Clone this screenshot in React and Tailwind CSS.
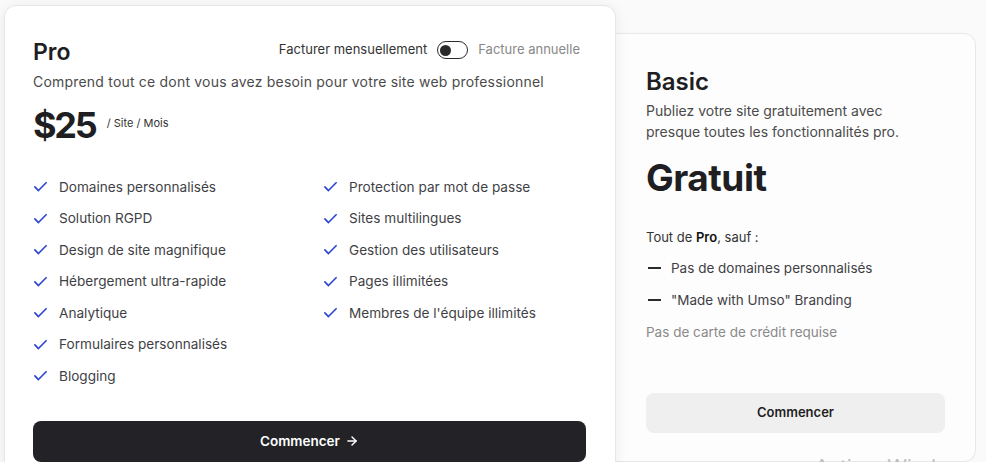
import { ArrowRight } from "lucide-react";

const proFeatures = [
  ["Domaines personnalisés", "Protection par mot de passe"],
  ["Solution RGPD", "Sites multilingues"],
  ["Design de site magnifique", "Gestion des utilisateurs"],
  ["Hébergement ultra-rapide", "Pages illimitées"],
  ["Analytique", "Membres de l'équipe illimités"],
  ["Formulaires personnalisés", null],
  ["Blogging", null],
];

function Check() {
  return (
    <svg width="15" height="15" viewBox="0 0 16 16" fill="none" className="shrink-0">
      <path d="M2 8.5l3.8 3.8L14 4" stroke="#2e45d4" strokeWidth="1.8" strokeLinecap="round" strokeLinejoin="round" />
    </svg>
  );
}

function Feature({ label }) {
  return (
    <div className="flex items-center gap-[11px] h-[31.5px]">
      <Check />
      <span className="text-[13.6px] text-[#3f3f46]">{label}</span>
    </div>
  );
}

function ProCard() {
  return (
    <div className="w-[612px] h-[480px] bg-white border border-[#e6e6e6] rounded-xl shadow-[0_2px_14px_rgba(0,0,0,0.07)] pl-[28px] pr-[29px] pt-[30px] relative z-10">
      <div className="flex items-center justify-between pr-[6px]">
        <h2 className="text-[23px] font-semibold text-[#1f1f23] leading-[32px]">Pro</h2>
        <div className="flex items-center gap-[10px] text-[13px] -mt-[4px]">
          <span className="text-[#333]">Facturer mensuellement</span>
          <div className="w-[31px] h-[18px] rounded-full border-[1.5px] border-[#2a2a2a] flex items-center px-[2px]">
            <div className="w-[11px] h-[11px] rounded-full bg-[#2a2a2a]" />
          </div>
          <span className="text-[#888]">Facture annuelle</span>
        </div>
      </div>
      <p className="text-[14px] text-[#4b4b4b] mt-[3px] tracking-[0.2px]">
        Comprend tout ce dont vous avez besoin pour votre site web professionnel
      </p>
      <div className="flex items-start gap-[11px] mt-[10px]">
        <span className="text-[36px] font-bold text-[#1f1f23] leading-[46px] tracking-[-2.2px]">$25</span>
        <span className="text-[11px] text-[#333] mt-[13px]">/ Site / Mois</span>
      </div>
      <div className="grid grid-cols-[290px_1fr] mt-[23px]">
        <div className="flex flex-col">
          {proFeatures.map((f) => (
            <Feature key={f[0]} label={f[0]} />
          ))}
        </div>
        <div className="flex flex-col">
          {proFeatures
            .filter((f) => f[1])
            .map((f) => (
              <Feature key={f[1]} label={f[1]} />
            ))}
        </div>
      </div>
      <button className="mt-[29px] w-full h-[41px] rounded-lg bg-[#232327] text-white text-[13.5px] font-semibold flex items-center justify-center gap-[5px]">
        Commencer
        <ArrowRight size={14} strokeWidth={2.5} />
      </button>
    </div>
  );
}

function BasicCard() {
  return (
    <div className="w-[360px] h-[429px] mt-[28px] bg-[#fdfdfd] border border-[#e8e8e8] border-l-0 rounded-r-xl pl-[30px] pr-[30px] pt-[32px] flex flex-col">
      <h2 className="text-[24px] font-semibold text-[#1f1f23] leading-[32px]">Basic</h2>
      <p className="text-[14px] text-[#4b4b4b] leading-[21px] mt-[2px] w-[280px]">
        Publiez votre site gratuitement avec presque toutes les fonctionnalités pro.
      </p>
      <div className="text-[37px] font-bold text-[#1f1f23] leading-[46px] mt-[13px] tracking-[-0.5px]">Gratuit</div>
      <p className="text-[13px] text-[#333] mt-[27px]">
        Tout de <span className="font-semibold text-[#111]">Pro</span>, sauf :
      </p>
      <div className="flex flex-col mt-[5px]">
        {["Pas de domaines personnalisés", '"Made with Umso" Branding'].map((t) => (
          <div key={t} className="flex items-center gap-[10px] h-[31.5px]">
            <div className="w-[13px] h-[2px] bg-[#2a2a2a] ml-[2px]" />
            <span className="text-[13.5px] text-[#3f3f46]">{t}</span>
          </div>
        ))}
      </div>
      <p className="text-[13.5px] text-[#8a8a8a] mt-[6px]">Pas de carte de crédit requise</p>
      <button className="mt-[51px] w-full h-[40px] rounded-lg bg-[#efefef] text-[#1f1f23] text-[13px] font-semibold">
        Commencer
      </button>
    </div>
  );
}

export default function App() {
  return (
    <div
      className="relative h-[462px] w-[986px] overflow-hidden bg-[#fafafa]"
      style={{ fontFamily: "Inter, 'Noto Sans', sans-serif" }}
    >
      <div className="flex items-start pl-[4px] pt-[5px]">
        <ProCard />
        <BasicCard />
      </div>
      <div className="absolute left-[815px] top-[452px] text-[20px] text-[#9a9a9a] opacity-60">
        Activer Windows
      </div>
    </div>
  );
}
